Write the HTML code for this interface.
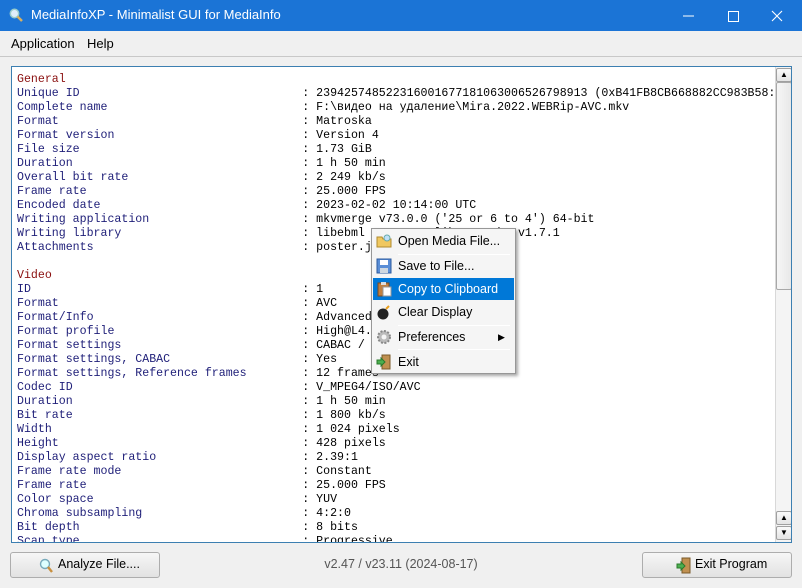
<!DOCTYPE html>
<html><head><meta charset="utf-8"><style>
*{margin:0;padding:0;box-sizing:border-box}
body{width:802px;height:588px;background:#f0f0f0;font-family:"Segoe UI","Liberation Sans",sans-serif;position:relative;overflow:hidden}
#title{position:absolute;left:0;top:0;width:802px;height:31px;background:#1b74d6;color:#fff;font-size:13px}
#title .t{position:absolute;left:31px;top:7px}
#menu{position:absolute;left:0;top:31px;width:802px;height:26px;border-bottom:1px solid #c8c8c8;font-size:13px;color:#000}
#menu span{position:absolute;top:5px}
#ta{position:absolute;left:11px;top:66px;width:781px;height:477px;border:1px solid #3c7fb1;background:#fff;overflow:hidden}
pre{position:absolute;left:5px;top:6px;font-family:"Liberation Mono","DejaVu Sans Mono",monospace;font-size:11.6px;line-height:14px;color:#000}
.k{color:#1e1e78}.h{color:#8a0f0f}
#sb{position:absolute;left:763px;top:0;width:16px;height:475px;background:#f4f4f4;border-left:1px solid #d8d8d8}
.sbtn{position:absolute;left:0;width:16px;height:14px;background:linear-gradient(#fafafa,#e4e4e4);border:1px solid #a0a0a0;border-radius:2px;font-size:8px;text-align:center;line-height:12px;color:#000}
#thumb{position:absolute;left:0;top:15px;width:16px;height:208px;background:linear-gradient(90deg,#f6f6f6,#e8e8e8);border:1px solid #a8a8a8;border-radius:2px}
#pop{position:absolute;left:371px;top:228px;width:145px;height:146px;background:#f5f5f5;border:1px solid #979797;box-shadow:2px 2px 3px rgba(0,0,0,.35);font-size:12.5px}
#pop .i{position:absolute;left:1px;width:141px;height:22px;line-height:22px;padding-left:25px;color:#000}
#pop .i.sel{background:#0078d7;color:#fff}
#pop .sep{position:absolute;left:26px;width:112px;height:1px;background:#d0d0d0;border-bottom:1px solid #fff}
.ic{position:absolute;left:3px;top:3px;width:16px;height:16px}
.btn{position:absolute;top:552px;width:150px;height:26px;border:1px solid #adadad;border-radius:3px;background:linear-gradient(#f6f6f6,#e2e2e2);font-size:12.5px;color:#000}
#ver{position:absolute;left:0;width:802px;top:557px;text-align:center;font-size:12.5px;color:#555}
</style></head><body>
<div id="title">
<svg style="position:absolute;left:9px;top:8px" width="14" height="14" viewBox="0 0 14 14"><circle cx="5.5" cy="5.5" r="4.2" fill="#dfeefa" stroke="#9cc" stroke-width="1.5"/><path d="M8.5 8.5L13 13" stroke="#d8b060" stroke-width="2.5"/></svg>
<span class="t">MediaInfoXP - Minimalist GUI for MediaInfo</span>
<svg style="position:absolute;left:680px;top:9px" width="110" height="14"><path d="M3 7h11" stroke="#fff"/><rect x="48.5" y="2.5" width="10" height="10" fill="none" stroke="#fff"/><path d="M92 2l10 10M102 2l-10 10" stroke="#fff" stroke-width="1.1"/></svg>
</div>
<div id="menu"><span style="left:11px">Application</span><span style="left:87px">Help</span></div>
<div id="ta"><pre><span class="h">General</span>
<span class="k">Unique ID                                </span>: 239425748522316001677181063006526798913 (0xB41FB8CB668882CC983B58:
<span class="k">Complete name                            </span>: F:\видео на удаление\Mira.2022.WEBRip-AVC.mkv
<span class="k">Format                                   </span>: Matroska
<span class="k">Format version                           </span>: Version 4
<span class="k">File size                                </span>: 1.73 GiB
<span class="k">Duration                                 </span>: 1 h 50 min
<span class="k">Overall bit rate                         </span>: 2 249 kb/s
<span class="k">Frame rate                               </span>: 25.000 FPS
<span class="k">Encoded date                             </span>: 2023-02-02 10:14:00 UTC
<span class="k">Writing application                      </span>: mkvmerge v73.0.0 ('25 or 6 to 4') 64-bit
<span class="k">Writing library                          </span>: libebml v1.4.4 + libmatroska v1.7.1
<span class="k">Attachments                              </span>: poster.jpg

<span class="h">Video</span>
<span class="k">ID                                       </span>: 1
<span class="k">Format                                   </span>: AVC
<span class="k">Format/Info                              </span>: Advanced Video Codec
<span class="k">Format profile                           </span>: High@L4.1
<span class="k">Format settings                          </span>: CABAC / 12 Ref Frames
<span class="k">Format settings, CABAC                   </span>: Yes
<span class="k">Format settings, Reference frames        </span>: 12 frames
<span class="k">Codec ID                                 </span>: V_MPEG4/ISO/AVC
<span class="k">Duration                                 </span>: 1 h 50 min
<span class="k">Bit rate                                 </span>: 1 800 kb/s
<span class="k">Width                                    </span>: 1 024 pixels
<span class="k">Height                                   </span>: 428 pixels
<span class="k">Display aspect ratio                     </span>: 2.39:1
<span class="k">Frame rate mode                          </span>: Constant
<span class="k">Frame rate                               </span>: 25.000 FPS
<span class="k">Color space                              </span>: YUV
<span class="k">Chroma subsampling                       </span>: 4:2:0
<span class="k">Bit depth                                </span>: 8 bits
<span class="k">Scan type                                </span>: Progressive</pre>
<div id="sb"><div class="sbtn" style="top:1px">▲</div><div id="thumb"></div>
<div class="sbtn" style="top:444px">▲</div><div class="sbtn" style="top:459px">▼</div></div>
</div>
<div id="pop">
<div class="i" style="top:1px"><svg class="ic" viewBox="0 0 16 16"><path d="M1 4h5l1 2h8v8H1z" fill="#f0c860" stroke="#b08a30"/><circle cx="11" cy="5" r="3" fill="#bfe0f8" stroke="#6aa"/></svg>Open Media File...</div>
<div class="sep" style="top:25px"></div>
<div class="i" style="top:26px"><svg class="ic" viewBox="0 0 16 16"><rect x="1" y="1" width="14" height="14" fill="#5a8ed6" stroke="#2c5aa0"/><rect x="4" y="2" width="8" height="5" fill="#fff"/><rect x="4" y="10" width="8" height="5" fill="#cfd8e0"/></svg>Save to File...</div>
<div class="i sel" style="top:49px"><svg class="ic" viewBox="0 0 16 16"><rect x="2" y="2" width="11" height="13" fill="#c08040" stroke="#7a4a20"/><rect x="5" y="1" width="5" height="3" fill="#ddd"/><rect x="7" y="6" width="8" height="9" fill="#fff" stroke="#999"/></svg>Copy to Clipboard</div>
<div class="i" style="top:72px"><svg class="ic" viewBox="0 0 16 16"><circle cx="7" cy="10" r="5.5" fill="#222"/><path d="M10 5l3-3" stroke="#e8a020" stroke-width="2"/></svg>Clear Display</div>
<div class="sep" style="top:96px"></div>
<div class="i" style="top:97px"><svg class="ic" viewBox="0 0 16 16"><circle cx="8" cy="8" r="6" fill="#bbb" stroke="#888" stroke-dasharray="2 1.5" stroke-width="2"/><circle cx="8" cy="8" r="2.5" fill="#f5f5f5"/></svg>Preferences<span style="position:absolute;left:125px;top:0;font-size:9px">▶</span></div>
<div class="sep" style="top:120px"></div>
<div class="i" style="top:122px"><svg class="ic" viewBox="0 0 16 16"><rect x="6" y="1" width="8" height="14" fill="#c09050" stroke="#7a5a2a"/><path d="M1 6h4V4l4 4-4 4v-2H1z" fill="#4caf50" stroke="#2a7a2a"/></svg>Exit</div>
</div>
<div class="btn" style="left:10px"><svg style="position:absolute;left:28px;top:5px" width="14" height="15" viewBox="0 0 14 15"><circle cx="6" cy="6" r="4.5" fill="#dff" stroke="#7ab" stroke-width="1.4"/><path d="M9 9l4 5" stroke="#c89040" stroke-width="2.4"/></svg><span style="position:absolute;left:47px;top:4px">Analyze File....</span></div>
<div id="ver">v2.47 / v23.11 (2024-08-17)</div>
<div class="btn" style="left:642px"><svg style="position:absolute;left:33px;top:4px" width="16" height="17" viewBox="0 0 16 17"><rect x="6" y="1" width="8" height="15" fill="#c09050" stroke="#7a5a2a"/><path d="M1 7h4V5l4 4-4 4v-2H1z" fill="#4caf50" stroke="#2a7a2a"/></svg><span style="position:absolute;left:52px;top:4px">Exit Program</span></div>
</body></html>
